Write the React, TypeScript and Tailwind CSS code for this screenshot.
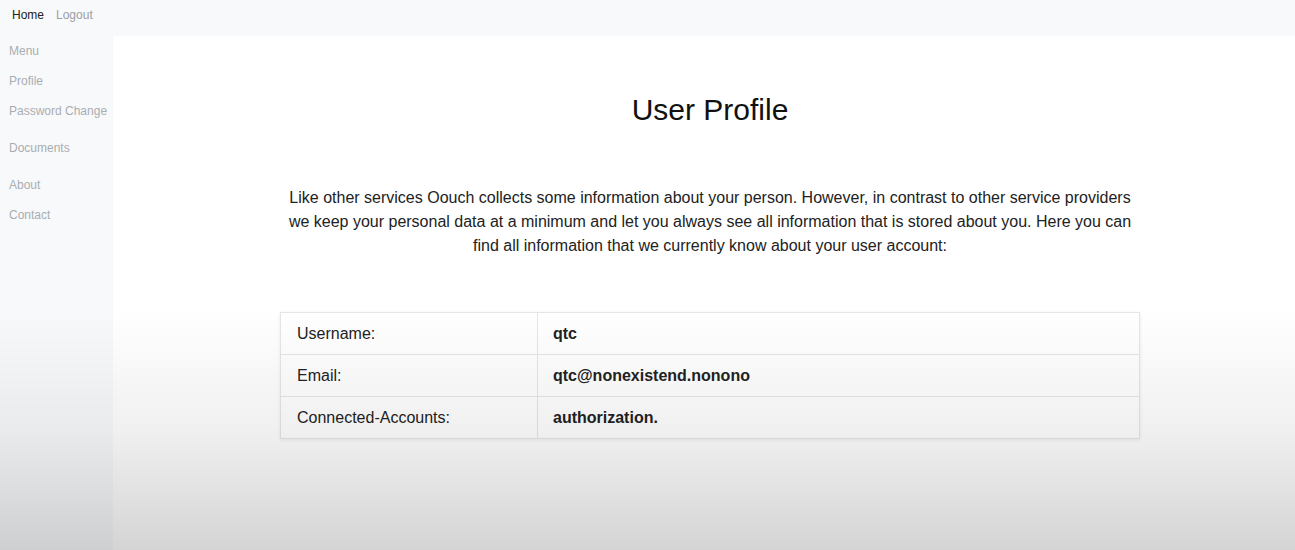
import React from 'react';

const menu = [
  { label: 'Menu', mt: 'mt-[8px]' },
  { label: 'Profile', mt: 'mt-[16px]' },
  { label: 'Password Change', mt: 'mt-[16px]' },
  { label: 'Documents', mt: 'mt-[23px]' },
  { label: 'About', mt: 'mt-[23px]' },
  { label: 'Contact', mt: 'mt-[16px]' },
];

const rows = [
  { k: 'Username:', v: 'qtc' },
  { k: 'Email:', v: 'qtc@nonexistend.nonono' },
  { k: 'Connected-Accounts:', v: 'authorization.' },
];

export default function App() {
  return (
    <div className="relative h-[550px] w-full overflow-hidden bg-white font-['Liberation_Sans',Arial,sans-serif]">
      {/* top nav */}
      <div className="flex h-[36px] items-start gap-[12px] bg-[#f8f9fa] pl-[12px] pt-[8px] text-[12px] leading-[14px]">
        <span className="text-[#222]">Home</span>
        <span className="text-[#9a9ea3]">Logout</span>
      </div>

      <div className="flex h-[514px]">
        {/* sidebar */}
        <div className="flex w-[113px] shrink-0 flex-col bg-[#f8f9fa] pl-[9px] text-[12px] leading-[14px] text-[#a9adb2]">
          {menu.map((m) => (
            <span key={m.label} className={m.mt}>
              {m.label}
            </span>
          ))}
        </div>

        {/* main */}
        <div className="flex flex-1 flex-col items-center pl-[12px]">
          <h1 className="mt-[56px] text-[30px] leading-[36px] text-[#111]">User Profile</h1>

          <p className="mt-[58px] w-[852px] text-center text-[16px] leading-[24px] text-[#222]">
            Like other services Oouch collects some information about your person. However, in contrast to other service providers
            we keep your personal data at a minimum and let you always see all information that is stored about you. Here you can
            find all information that we currently know about your user account:
          </p>

          <table className="mt-[54px] w-[860px] border-collapse text-[16px] text-[#222] shadow-[0_1px_4px_rgba(0,0,0,0.08)]">
            <tbody>
              {rows.map((r) => (
                <tr key={r.k} className="h-[42px] border border-[#e6e6e6]">
                  <td className="w-[257px] border-r border-[#e6e6e6] pl-[16px]">{r.k}</td>
                  <td className="pl-[15px] font-bold">{r.v}</td>
                </tr>
              ))}
            </tbody>
          </table>
        </div>
      </div>

      {/* video vignette at the bottom */}
      <div className="pointer-events-none absolute inset-x-0 bottom-0 h-[240px] bg-gradient-to-b from-transparent via-[rgba(0,0,0,0.06)] to-[rgba(0,0,0,0.17)]" />
    </div>
  );
}
